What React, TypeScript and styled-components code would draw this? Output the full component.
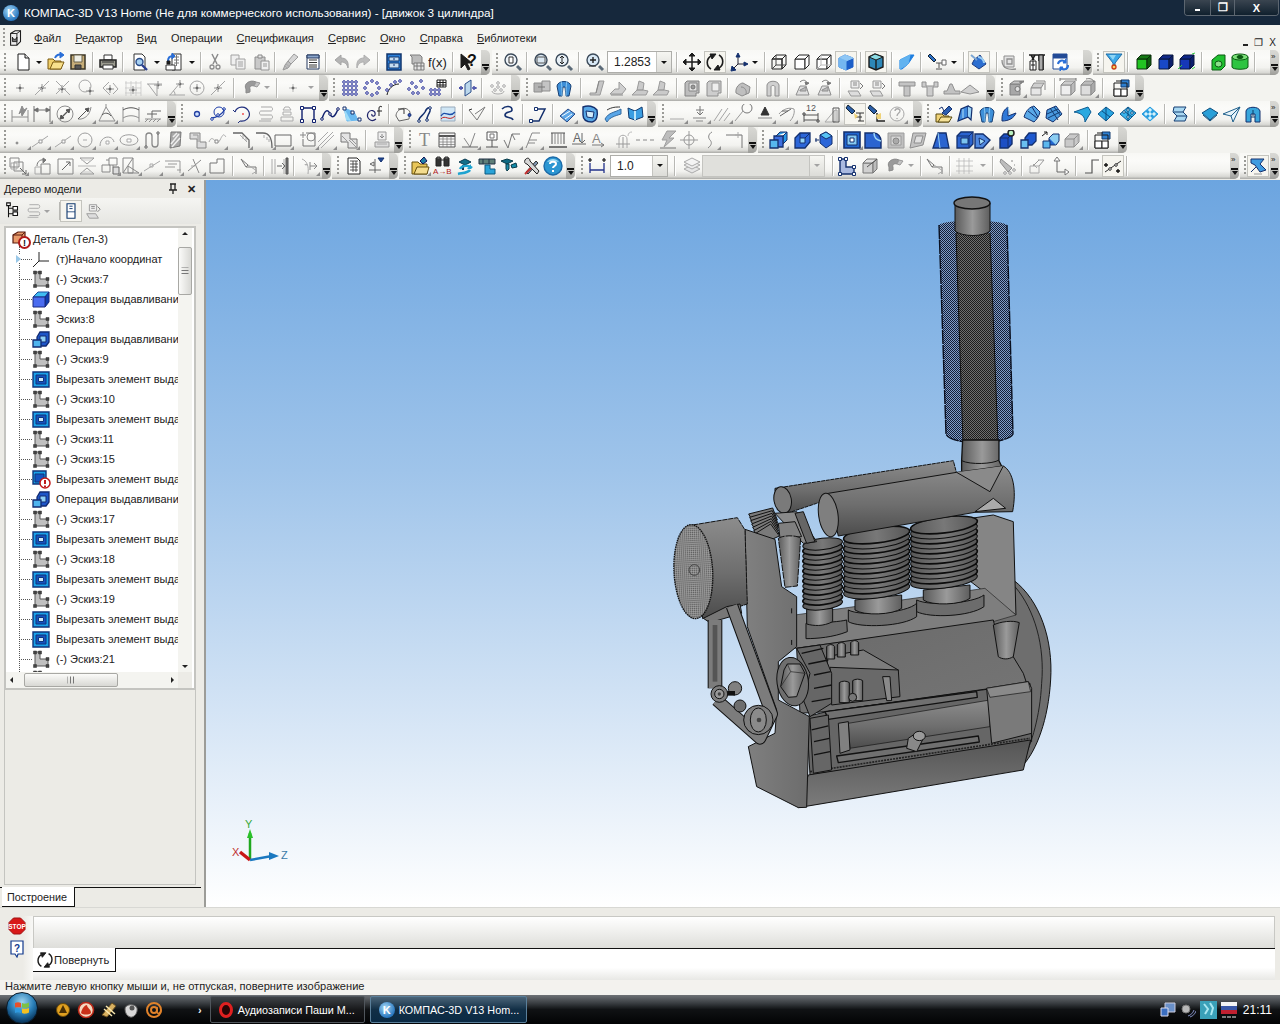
import React from 'react';
import styled, { createGlobalStyle } from 'styled-components';

const FONT = '"Liberation Sans", Arial, sans-serif';
const Global = createGlobalStyle`
  html, body { margin: 0; padding: 0; background: #ecebe6; }
  * { box-sizing: border-box; }
  body { font-family: ${FONT}; font-size: 11px; color: #111; }
`;

/* ---------- icon library ---------- */
type P = [string, string, string, number?];
const K = '#1c1c1c', N = '#14306e', B = '#2a6fd8', L = '#69b8ef', G = '#929292', W = '#fff', Y = '#efd277', X = 'none';
const cube = (f: string, t: string, r: string, s = N): P[] => [['M3 7H13V17H3Z', f, s], ['M3 7L7 3H17L13 7Z', t, s], ['M13 7L17 3V13L13 17Z', r, s]];
const mag = (f = '#eef3f8'): P[] => [['M14 14L18 18', X, '#5b6a78', 3], ['M2 8a6 6 0 1 0 12 0a6 6 0 1 0-12 0', f, '#3b4a5a', 1.4]];
const pt = (x = 10, y = 10, c = G): P[] => [[`M${x} ${y - 4}V${y + 4}M${x - 4} ${y}H${x + 4}`, X, c], [`M${x - 1} ${y}a1 1 0 1 0 2 0a1 1 0 1 0-2 0`, '#666', '#666']];
const dots = (arr: number[][], c = '#27309a'): P[] => arr.map(([x, y]) => [`M${x - 1.3} ${y}a1.3 1.3 0 1 0 2.6 0a1.3 1.3 0 1 0-2.6 0`, W, c] as P);
const diamond = (f: string): P[] => [['M2 10L10 3L18 9L10 17Z', f, '#0f5c92'], ['M6 7L14 13M10 3L10 17', X, '#0c4f82']];

const ICONS: Record<string, P[]> = {
  doc: [['M5 2H12L16 6V18H5Z', W, K], ['M12 2V6H16', '#ddd', K]],
  docK: [['M4 5L9 2H15V14L11 18H4Z', '#eee', K, 1.2], ['M4 5H11V18M11 5L15 2', X, K], ['M6 9a2.5 2.5 0 1 0 5 0V14H6Z', '#777', K]],
  open: [['M2 7H7L9 9H15V17H2Z', '#f0cf6a', '#7a5a10'], ['M4 17L7 10H18L15 17Z', '#f8e08c', '#7a5a10'], ['M9 6C10 3 13 2 15 3', X, B, 2], ['M14 0L18 3L14 6Z', B, B]],
  save: [['M3 3H17V17H3Z', '#c6ad78', '#3a3424', 1.5], ['M6 3H14V10H6Z', '#efefe6', '#6b624a'], ['M7 13H13V17H7Z', '#555', '#333']],
  print: [['M6 3H14V8H6Z', W, '#333'], ['M2 8H18V15H2Z', '#9a9a8e', '#222', 1.5], ['M5 13H15V17H5Z', W, '#333'], ['M4 10H16', X, '#333']],
  preview: [['M4 2H12L15 5V18H4Z', W, '#333'], ['M6 10a3.5 3.5 0 1 0 7 0a3.5 3.5 0 1 0-7 0', '#a7d1f2', '#284a88', 1.4], ['M12 13L17 18', X, '#2a3f8f', 2.4]],
  copies: [['M8 2H17V18H8Z', W, '#333'], ['M10 5H15M10 8H15M10 11H15M12.5 3V14', X, '#777'], ['M2 13H11V18H2Z', W, '#333'], ['M4 9C4 6 6 4 9 4', X, B, 2], ['M8 1L11 4L8 7Z', B, B], ['M3 9H6V12H3Z', K, K]],
  cut: [['M7 2L12 12M13 2L8 12', X, '#8c8c8c', 1.5], ['M5 15a2 2 0 1 0 4 0a2 2 0 1 0-4 0M11 15a2 2 0 1 0 4 0a2 2 0 1 0-4 0', X, '#8c8c8c', 1.3]],
  copy: [['M3 3H11V13H3Z', '#efefef', '#a2a2a2'], ['M8 7H17V17H8Z', '#efefef', '#a2a2a2'], ['M10 10H15M10 12H15M10 14H15', X, '#a2a2a2']],
  paste: [['M3 5H13V17H3Z', '#c9c9c9', '#8e8e8e'], ['M6 3H10V6H6Z', '#e8e8e8', '#888'], ['M9 9H17V18H9Z', '#f0f0f0', '#949494'], ['M11 12H15M11 14H15', X, '#999']],
  brush: [['M14 2L18 5L11 12L8 9Z', '#d6d6d6', '#9c9c9c'], ['M8 9L11 12L8 16L3 18L5 13Z', '#bdbdbd', '#9a9a9a'], ['M5 14L8 17M6 12L10 15', X, '#aaa']],
  tbl: [['M4 3H16V17H4Z', W, '#24385e'], ['M4 3H16V6H4Z', '#8ba6cc', '#24385e'], ['M6 8H14M6 10.5H14M6 13H14M6 15H14', X, '#333']],
  undo: [['M2 8L8 3V6C13 6 16 9 15 16C14 12 12 10 8 10V13Z', '#b4b4b4', '#a4a4a4']],
  redo: [['M18 8L12 3V6C7 6 4 9 5 16C6 12 8 10 12 10V13Z', '#bcbcbc', '#aeaeae']],
  panel: [['M3 2H17V18H3Z', '#2b7fd8', '#12366c', 1.5], ['M5 5H15V9H5Z', '#c6def2', '#12366c'], ['M5 11H15V16H5Z', '#c6def2', '#12366c'], ['M9 7H11M9 13H11', X, N]],
  vars: [['M4 3H14L16 5V12H6V5Z', '#bcbcbc', '#7f7f7f'], ['M8 11H18V18H8Z', '#e4e4e4', '#7a7a7a'], ['M11 11V18M15 11V18M8 14H18', X, '#777']],
  help: [['M3 2L3 16L7 12L10 18L12 17L9 11L14 11Z', K, K]],
  zoomD: [...mag(), ['M6 5H10V11H6Z', W, '#333']],
  zoomS: [...mag('#dbe8f2'), ['M4 5H12V11H4Z', X, '#555']],
  zoomA: [...mag('#e8f0f6'), ['M8 4V12M6 6L8 4L10 6M6 10L8 12L10 10', X, '#222']],
  zoomP: [...mag('#d8e8f5'), ['M8 5V11M5 8H11', X, '#222', 1.4], ['M4 14H11', X, '#333']],
  pan: [['M10 2V18M2 10H18', X, K, 1.5], ['M10 1L7 4H13ZM10 19L7 16H13ZM1 10L4 7V13ZM19 10L16 7V13Z', K, K]],
  rotate: [['M6 4C1 7 1 14 6 17', X, K, 1.6], ['M14 16C19 13 19 6 14 3', X, K, 1.6], ['M5 2H11L7 7Z', K, K], ['M15 18H9L13 13Z', K, K]],
  axes: [['M8 12V3M8 12H17M8 12L2 18', X, '#223'], ['M8 1L6 5H10Z', N, N], ['M18 12L14 10V14Z', N, N], ['M1 19L2 14L6 18Z', N, N]],
  wire: [...cube('none', 'none', 'none', '#222'), ['M3 17L7 13H17M7 3V13', X, '#444']],
  hide: cube(W, W, W, '#222'),
  thin: [...cube(W, W, W, '#222'), ['M3 17L7 13H17M7 3V13', X, '#bbb']],
  shade: [['M3 6L9 3L17 6V15L10 18L3 15Z', '#1c5fc8', '#1c5fc8'], ['M3 6L9 3L17 6L10 9Z', '#8fc7f5', '#8fc7f5'], ['M10 9V18L3 15V6Z', '#74b7f0', '#74b7f0']],
  shadeE: [['M3 5L9 2L17 5V15L10 18L3 15Z', '#2d87b8', K, 1.4], ['M3 5L9 2L17 5L10 8Z', '#8bdbe4', K], ['M10 8V18', X, K, 1.4]],
  persp: [['M4 8L14 3L18 3L12 12L6 17L4 17Z', '#1f7fe0', '#1f7fe0'], ['M4 8L14 3L12 12L4 17Z', '#62b3f0', '#62b3f0']],
  lamp: [['M3 2L9 8L7 10L1 4Z', '#2d6fc4', '#123'], ['M9 11L15 11M12 11V16M9 17H15', X, '#555'], ['M15 8H19V13H15Z', W, '#666']],
  orient: [['M5 8L11 3L17 12L10 17L3 12Z', '#2d6fd0', '#1e3d80'], ['M9 5C12 5 15 8 15 11', X, '#9ccff5', 2], ['M2 3L8 8', X, '#7aa6d4', 2]],
  coil: [['M5 4H15V15H5Z', '#e4e4e4', '#8e8e8e'], ['M8 7H13V12H8ZM3 8C3 17 10 18 17 17', X, '#8e8e8e', 1.3]],
  crane: [['M2 3H18M4 3L7 8M8 3L5 8M12 3V9M16 3V18', X, K, 1.5], ['M3 9H9V18H3Z', W, K], ['M4 13H8M6 9V18', X, K], ['M12 3H16V18H12Z', '#aaa', K]],
  refresh: [['M2 2H16V6H2Z', '#224a96', '#224a96'], ['M2 6H16V17H2Z', W, '#224a96'], ['M7 12a4 4 0 0 1 7-2', X, B, 2], ['M17 13a4 4 0 0 1-7 3', X, B, 2], ['M15 7V11H12Z', B, B], ['M9 19V15H12Z', B, B]],
  funnel: [['M2 2H18L11 11V14H9V11Z', '#3ca8e8', '#1f6ca8'], ['M5 3H12L9 8Z', '#8fd5f5', X], ['M8 15a2 2 0 1 0 4 0a2 2 0 1 0-4 0', '#f4d45c', '#c83a10', 1.3]],
  cubeGr: cube('#22c422', '#177a17', '#0f5c0f', '#0b2d0b'),
  cubeBl: cube('#1848c8', '#122a88', '#0c1f6c', '#08163f'),
  cubeBd: [...cube('#1638b8', '#0f2788', '#0c1f6c', '#08163f'), ['M1 17L5 13M15 2L18 1M15 17L18 15', X, '#33cc44']],
  holeG: [['M3 8L9 3H16V14L12 18H3Z', '#20c030', '#0a5a12'], ['M6 12a3.5 3 0 1 0 7 0a3.5 3 0 1 0-7 0', '#8ae08a', '#0a5a12']],
  cylG: [['M2 5V15C2 18 18 18 18 15V5Z', '#2ec442', '#0a5a12'], ['M2 5C2 1 18 1 18 5C18 9 2 9 2 5Z', '#7ce07a', '#0a5a12'], ['M7 5C7 3 13 3 13 5C13 7 7 7 7 5Z', '#0a5a12', '#0a5a12']],
  pt: pt(),
  ptL: [...pt(), ['M3 17L17 3', X, '#a6a6a6']],
  ptX: [...pt(9, 11), ['M3 3L17 17M16 3L3 16', X, '#a6a6a6']],
  ptC: [...pt(13, 13), ['M2 8a6 6 0 1 0 12 0a6 6 0 1 0-12 0', X, '#a6a6a6']],
  ptA: [...pt(10, 11), ['M3 10L9 4M3 10L10 17M13 5L18 11L13 16', X, '#a6a6a6']],
  ptG: [...pt(10, 12), ['M3 3V18M8 3V18M13 3V18M18 3V18M2 5H18M2 10H18M2 15H18', X, '#c2c2c2', 0.7]],
  ptT: [...pt(13, 7), ['M2 6H17M3 6L12 18V6', X, '#a6a6a6']],
  ptAng: [...pt(13, 6), ['M2 17H18M3 17L13 5M8 17C8 14 7 13 6 13', X, '#a6a6a6']],
  ptO: [...pt(), ['M3 10a7 7 0 1 0 14 0a7 7 0 1 0-14 0', X, '#a6a6a6']],
  ptSm: pt(10, 10, '#b5b5b5'),
  magnet: [['M4 11C1 6 8 1 14 4L12 8C9 7 7 9 8 11L8 14L4 15Z', '#9a9a9a', '#8a8a8a'], ['M14 4L18 5L15 9L12 8Z', '#c4c4c4', '#999']],
  dotsM: dots([[4, 4], [8, 4], [12, 4], [16, 4], [4, 8], [8, 8], [12, 8], [16, 8], [4, 12], [8, 12], [12, 12], [16, 12], [4, 16], [8, 16], [12, 16], [16, 16]]),
  dotsC: dots([[10, 3], [15, 5], [17, 10], [15, 15], [10, 17], [5, 15], [3, 10], [5, 5]]),
  dotsArc: [['M3 17C4 11 9 6 15 6', X, K], ...dots([[3, 12], [7, 7], [11, 4], [16, 3]])],
  dotsP: dots([[6, 5], [3, 11], [10, 9], [15, 3], [12, 15], [17, 10], [7, 15]]),
  dotsT: [['M9 2H18V9H9Z', W, K], ['M9 4.5H18M9 7H18M12 2V9M15 2V9', X, K], ...dots([[3, 12], [7, 12], [11, 12], [3, 16], [7, 16], [11, 16]])],
  mirror: [['M7 6L13 2V14L7 18Z', '#bcd8ec', '#2c4f8a'], ...dots([[3, 10], [16, 10]]), ['M1 10H5M15 10H19', X, '#27309a']],
  dotsG: [['M4 13C4 17 16 17 16 13', X, '#aaa'], ...dots([[4, 8], [10, 5], [16, 8], [7, 12], [13, 12], [10, 9]], '#a8a8a8')],
  cubes: [['M1 5H9V14H1Z', '#b2b2b2', '#8e8e8e'], ['M9 3H17V13H9Z', '#c4c4c4', '#8e8e8e'], ['M5 9H12', X, '#777']],
  arch: [['M5 18L3 8C4 2 16 2 17 8L15 18H12L11 9H9L8 18Z', '#3d8fd8', '#173e72'], ['M7 3C8 7 8 12 8 18M13 3C12 7 12 12 12 18', X, '#8cc7ef']],
  bendA: [['M3 15H9L12 3H17L13 17H3Z', '#c6c6c6', '#9a9a9a'], ['M9 15L12 3', X, '#888']],
  bendB: [['M2 16L7 11L11 11V4L18 11L14 16Z', '#cfcfcf', '#9a9a9a'], ['M3 17H15', X, '#888']],
  foldA: [['M2 17L7 12L9 3L14 5L13 12L18 13L16 17Z', '#cacaca', '#9a9a9a'], ['M7 12L13 12', X, '#888']],
  plate: [['M5 3H17V15H14V18H3V5Z', '#bdbdbd', '#828282'], ['M7 5H15V13H7Z', '#e0e0e0', '#888'], ['M9 9a2 2 0 1 0 4 0a2 2 0 1 0-4 0', '#999', '#777']],
  plate2: [['M5 3H17V15H14V18H3V5Z', '#cdcdcd', '#8e8e8e'], ['M8 5H15V13H8Z', '#eee', '#999']],
  hex: [['M3 15C2 9 7 5 10 5L17 9L16 15L9 18Z', '#bfbfbf', '#8c8c8c'], ['M8 9C12 9 14 13 13 16', X, '#8c8c8c']],
  archG: [['M4 18V7C5 2 15 2 16 7V18H12V9C12 7 8 7 8 9V18Z', '#d0d0d0', '#8e8e8e']],
  rotG: [['M3 17H16L13 8H7Z', '#e0e0e0', '#8e8e8e'], ['M7 12L13 9V13H7Z', '#bbb', '#8e8e8e'], ['M7 4C10 1 14 2 14 6', X, '#777'], ['M13 7L16 5L12 4Z', '#777', '#777']],
  stack: [['M6 3H14V10H6Z', '#eee', '#999'], ['M8 5H12M8 7H12', X, '#888'], ['M3 13H13L16 18H6Z', '#ddd', '#999'], ['M15 5L18 8L15 11', X, '#777']],
  tee: [['M2 4H18V8H13V18H7V8H2Z', '#c4c4c4', '#909090'], ['M7 8H13', X, '#888']],
  tee2: [['M2 4H6V8H14V4H18V9H13V18H7V9H2Z', '#cccccc', '#909090']],
  ramp: [['M2 16H18V13H13L10 6H8L5 13H2Z', '#c2c2c2', '#909090']],
  ramp2: [['M1 14L10 7L19 14L10 16Z', '#d0d0d0', '#909090']],
  cornerD: [['M4 6H14V17H4Z', '#a8a8a8', '#808080'], ['M4 6L8 3H18L14 6Z', '#c5c5c5', '#808080'], ['M9 11a2.5 2.5 0 1 0 5 0a2.5 2.5 0 1 0-5 0', '#e0e0e0', '#777'], ['M15 6V3M13 4H18', X, '#777']],
  cornerO: [['M3 10H13L16 5H6Z', '#cfcfcf', '#8e8e8e'], ['M3 10V17H13V10Z', '#e6e6e6', '#8e8e8e'], ['M8 3H17V12', X, '#888']],
  cubeA: [...cube('#eee', '#ccc', '#bbb', '#8e8e8e'), ['M2 1H18M2 0V3M18 0V3', X, '#777']],
  cubeR: [...cube('#ddd', '#bbb', '#aaa', '#8e8e8e'), ['M8 1C12 0 15 1 16 4', X, '#777']],
  group: [['M9 2H17V9H9Z', '#2d7fd0', '#123a6e'], ['M2 5H15V18H2Z', X, K], ['M2 11H9V18H2Z', W, K], ['M9 11H15V18H9Z', W, K], ['M4 3L10 3', X, K]],
  dimAuto: [['M2 6V18M18 6V18M2 13H18', X, '#8e8e8e'], ['M9 10L12 2L14 6L17 4L12 12L11 8Z', '#8d8d8d', '#8d8d8d']],
  dimH: [['M2 2V18M18 2V18M2 6H18', X, '#707070'], ['M2 6L6 4V8ZM18 6L14 4V8Z', '#707070', '#707070']],
  dimD: [['M2 10a8 8 0 1 0 16 0a8 8 0 1 0-16 0', X, '#8e8e8e'], ['M5 15L15 5', X, '#555', 1.2], ['M15 5L11 6L14 9ZM5 15L9 14L6 11Z', '#555', '#555']],
  dimR: [['M3 15C8 16 15 12 16 3', X, '#8e8e8e'], ['M3 15L13 5', X, '#555'], ['M14 4L10 5L13 8Z', '#555', '#555']],
  dimA: [['M2 17H18L9 3Z', X, '#8e8e8e'], ['M5 11C8 8 12 9 14 12', X, '#555'], ['M9 3V0', X, '#8e8e8e']],
  dimArc: [['M2 3V18M18 3V18M2 14C7 11 13 11 18 14', X, '#8e8e8e'], ['M2 6C7 3 13 3 18 6', X, '#555']],
  rough: [['M2 15H18M2 18L5 15M6 18L9 15M10 18L13 15M14 18L17 15', X, '#8e8e8e'], ['M9 14V7H18M4 10H14', X, '#666']],
  ptB: [['M7.5 10a2.5 2.5 0 1 0 5 0a2.5 2.5 0 1 0-5 0', '#cfe0ff', '#2340a0', 1.3]],
  circs: [['M3 14C8 14 14 11 17 5', X, '#1f3fa8', 1.3], ...dots([[4, 15], [10, 11], [16, 5]], '#1f3fa8'), ['M6 8a5 5 0 1 0 10 0a5 5 0 1 0-10 0', X, '#1f3fa8']],
  arcB: [['M3 8C5 2 14 1 17 8C19 14 13 18 8 17', X, '#21307e', 1.2], ['M10 10L12 10', X, '#f05050', 1.5], ['M3 8L1 6M8 17L6 19', X, '#21307e']],
  coilG: [['M6 3H16C18 3 18 7 16 7H6C4 7 4 11 6 11H16C18 11 18 15 16 15H6', X, '#a7a7a7'], ['M4 17H16', X, '#aaa']],
  stackG: [['M8 3H12L14 6H6ZM6 8H14V11H6ZM4 13H16V17H4Z', X, '#acacac']],
  polyB: [['M4 4H16M4 4V17M16 4V17', X, '#10206e', 1.4], ['M2.5 2.5H5.5V5.5H2.5ZM14.5 2.5H17.5V5.5H14.5ZM2.5 15.5H5.5V18.5H2.5ZM14.5 15.5H17.5V18.5H14.5Z', W, '#10206e']],
  splineB: [['M2 15C5 5 8 5 10 10S15 13 18 5', X, '#10206e', 1.5], ...dots([[2, 15], [10, 10], [18, 5]], '#10206e')],
  surfB: [['M2 4L12 8L16 16L5 17Z', L, L], ['M2 4L4 16L9 17', '#9ddcf8', X], ['M1 3H4V6H1ZM9 7H12V10H9ZM16 14H19V17H16Z', W, N]],
  spiralF: [['M11 15C6 19 1 14 3 9C5 5 11 6 10 11C9 13 6 12 7 10', X, '#20256a', 1.2], ['M14 12V4C14 2 16 2 17 3M12 7H17', X, '#222']],
  arcC: [['M3 12C3 5 13 1 17 8L16 15L6 17Z', X, '#666'], ['M5 5H11V10', X, '#333'], ['M15 11a1.5 1.5 0 1 0 3 0a1.5 1.5 0 1 0-3 0', '#3350c8', N]],
  curveB: [['M4 18C2 14 8 12 10 8C12 3 16 2 15 7C14 11 11 12 12 17', X, N, 1.5], ...dots([[4, 17], [15, 4], [12, 16]], N)],
  hatchB: [['M3 3H17V17H3Z', '#cfe6f5', '#9ab'], ['M3 12C7 5 11 15 17 8', X, '#1b4da8', 1.4], ['M3 15C7 10 11 18 17 12', X, '#c02020']],
  angleV: [['M2 6L10 16L18 3L8 10', X, '#7a7a7a'], ['M2 6L5 5', X, '#333']],
  spring: [['M4 5C8 1 14 2 14 6C14 9 7 7 7 11C7 15 14 12 15 16', X, N, 1.6]],
  zig: [['M3 17H11L17 5H8', X, N, 1.5], ['M1.5 15.5H4.5V18.5H1.5ZM6.5 3.5H9.5V6.5H6.5Z', W, N]],
  uv: [['M3 12L11 5L18 10L10 18Z', '#5fa8e8', '#284a88'], ['M5 12L13 7M8 15L15 10', X, W]],
  blob: [['M3 3C8 1 14 2 17 6C18 11 17 17 12 18C7 18 3 16 3 11Z', '#57a7e6', N, 1.4], ['M6 7L14 8L13 14L7 13Z', '#d2ecfb', N]],
  wave: [['M2 15C6 8 11 9 18 5V10C12 12 7 13 4 18Z', '#5aa7e8', '#356a9e'], ['M4 6C9 3 13 3 17 3', X, '#333']],
  swoop: [['M3 4L10 7L17 3L18 13L10 16L4 14Z', '#3a9ee2', '#123a6e'], ['M10 7L10 16', X, '#bfe7f9', 2]],
  line: [['M3 15H17', X, '#aaa']],
  tol: [['M10 2V11M6 6H14M10 11L7 8M10 11L13 8', X, '#777'], ['M3 14H16M6 17H13', X, '#888']],
  hatchL: [['M2 17L10 5M7 17L16 4M12 17L18 9', X, '#a5a5a5']],
  circT: [['M9 4a5 5 0 1 0 10 0a5 5 0 1 0-10 0', X, '#777'], ['M2 17L10 7', X, '#999']],
  triBase: [['M10 3L14 11H6Z', '#333', '#333'], ['M3 14H17', X, '#888']],
  arrowT: [['M2 10C6 5 12 3 17 5C18 9 16 14 13 17', X, '#999'], ['M5 7H11M3 12L14 5', X, '#666']],
  dim12: [['M3 9V18M17 9V18M3 11H17M3 16H17', X, '#555'], ['M2 9H4V11H2ZM16 16H18V18H16Z', W, '#444']],
  wallG: [['M2 18L12 6V18Z', X, '#aaa'], ['M10 4H16V18H10Z', X, '#555'], ['M12 6H14V18', X, '#999']],
  lampY: [['M3 1L10 7L7 10L1 4Z', '#2a5ea8', '#123'], ['M11 9L19 9M11 13L17 13M13 17H19M15 9V17', X, '#333'], ['M9 9L13 12L10 15Z', Y, X]],
  lampY2: [['M3 1L10 7L7 10L1 4Z', '#2a5ea8', '#123'], ['M10 9V17H18', X, '#222', 1.4], ['M9 11L14 9V15H10Z', Y, X]],
  quest: [['M3 10a7 7 0 1 0 14 0a7 7 0 1 0-14 0', X, '#a8a8a8'], ['M8 7C8 4 13 4 13 7C13 9 10 9 10 12M10 14V15', X, '#a8a8a8', 1.3]],
  folderY: [['M2 10H8L10 12H15V18H2Z', '#efd277', '#5b4b10'], ['M4 18L7 13H18L15 18Z', '#f5e29a', '#5b4b10'], ['M8 9L15 2L18 5L12 11Z', '#2d5fb0', N], ['M5 5L8 3L10 7', X, N]],
  shell: [['M3 17L6 5L13 2V13L3 17Z', '#3e88dc', N, 1.2], ['M13 2L17 4L16 16L13 13', '#9ad2f5', N, 1.2], ['M8 5V14', X, '#aee0fa']],
  sideB: [['M3 15C3 8 6 5 9 3V12L17 9C15 14 10 17 3 17Z', '#2f79d8', N], ['M9 3L11 10', X, '#a6dcf5']],
  coneB: [['M2 13C4 6 8 3 12 2L18 8C17 13 14 16 12 18Z', '#5aa9e8', N], ['M6 7L15 14M10 3L16 13', X, N]],
  gridB: [['M3 6L12 2L18 10L9 18L2 14Z', '#4a9ae0', N], ['M6 4L14 16M10 3L17 12M3 10L14 5M4 14L16 8', X, '#123a6e']],
  wingB: [['M1 8L15 3L18 8L12 18C12 13 9 9 1 8Z', '#2aa9e0', '#0f5c92']],
  diamA: diamond('#2aa4e0'),
  diamB: [...diamond('#39b4ec'), ...dots([[6, 8], [10, 6], [14, 9], [10, 13]], '#0b5c92')],
  diamC: [['M2 10L10 3L18 10L10 17Z', '#2a9ee0', '#2a9ee0'], ...dots([[6, 10], [10, 6], [14, 10], [10, 14], [10, 10]], '#bdeafa')],
  ribbon: [['M4 3H16L13 8L17 12L15 17H4L7 12L3 8Z', '#a9d8f2', '#173e72'], ['M4 8H13M7 12H17', X, '#173e72']],
  plane: [['M2 9L10 4L18 9L10 16Z', '#2aa0d8', '#0f4f7e'], ['M3 11L10 17L17 11', X, '#0f4f7e']],
  paper: [['M1 10L18 3L11 18L9 12Z', '#e8f4fa', '#20608c'], ['M9 12L18 3', X, '#20608c']],
  sail: [['M3 18V7C4 2 16 2 17 7V18H12V10H8V18Z', '#39a6dc', N], ['M10 6V12M8 13H12', X, '#0f3b66']],
  dot: [['M6 13a1 1 0 1 0 2 0a1 1 0 1 0-2 0', '#999', '#888']],
  line1: [['M2 17L18 6', X, '#a5a5a5'], ['M9 10H12V13H9Z', W, '#999']],
  circG: [['M3 10a7 7 0 1 0 14 0a7 7 0 1 0-14 0', X, '#9e9e9e'], ['M8 10H12', X, '#aaa']],
  arcG: [['M3 16C3 6 15 4 17 12', X, '#9e9e9e'], ['M9 11H12V14H9Z', W, '#aaa']],
  ellG: [['M1 10C1 3 19 3 19 10C19 17 1 17 1 10Z', X, '#9e9e9e'], ['M8 9H12V12H8Z', W, '#aaa']],
  sShape: [['M3 16V6C3 2 9 2 9 6V14C9 18 15 18 15 14V4', X, '#888', 1.3], ['M14 2H16V4H14ZM2 16H4V18H2Z', W, '#666']],
  hatchC: [['M6 2L16 2L15 16L5 18Z', '#a8a8a8', '#777'], ['M6 14L14 4M7 17L15 8M8 7L12 3', X, '#eee', 1.5]],
  stepG: [['M2 3H12V12H18V18H9V9H2Z', '#dcdcdc', '#888'], ['M5 5H10V12', X, '#999']],
  waveG: [['M2 12C6 2 9 18 13 10S17 5 19 7', X, '#aaa'], ['M8 10H11V13H8Z', W, '#888']],
  chamf: [['M1 3H10L17 10V18', X, '#666', 1.3], ['M8 5L15 12M11 5V9M14 8V11', X, '#aaa', 1]],
  filletG: [['M1 3H8C14 3 17 8 17 18', X, '#666', 1.3], ['M9 5V8M12 7V10M14 9V12', X, '#aaa', 1]],
  rect: [['M2 5H18V16H2Z', X, '#666']],
  trans: [['M8 3H17V16H5V9', X, '#777'], ['M5 2V8M2 5H8', X, '#888'], ['M9 7a4 4 0 1 0 8 0a4 4 0 1 0-8 0', X, '#888']],
  hatchG: [['M2 17L17 2M5 18L18 5M2 12L12 2', X, '#aaa']],
  hatchBox: [['M2 3H11V9H18V18H9V12H2Z', '#e4e4e4', '#777'], ['M3 6L8 11M10 10L17 17M12 9L17 14', X, '#999']],
  insert: [['M6 2H14V10H6Z', '#eee', '#999'], ['M10 4V8M8 6L10 8L12 6', X, '#888'], ['M3 12H17V17H3Z', '#ddd', '#999'], ['M5 14H15', X, '#aaa']],
  tbl2: [['M2 3H18V17H2Z', '#f6f6f6', '#555'], ['M2 6H18', X, '#555', 2], ['M2 9H18M2 12H18M2 14.5H18M6 6V17M10 6V17M14 6V17', X, '#777', 0.7]],
  check: [['M4 8L10 17L15 3', X, '#888'], ['M2 17H18', X, '#666']],
  flag: [['M5 2H15V10H5Z', W, '#555'], ['M10 10V17M4 17H16', X, '#555'], ['M8 4H12V8H8Z', X, '#777']],
  rough2: [['M2 10L6 18L10 4H18M10 4L13 10', X, '#777']],
  rough3: [['M3 18L9 3H17M6 10H14M5 13H12', X, '#888']],
  base: [['M4 3V14M16 3V14M3 3H17', X, '#555'], ['M7 3V14M10 3V14M13 3V14', X, '#888'], ['M1 17H19', X, '#444', 1.4]],
  thread: [['M6 18V9C6 4 14 4 14 9V18', X, '#aaa'], ['M3 14H17M10 7V18', X, '#999'], ['M15 6C15 3 17 2 19 2', X, '#bbb']],
  dash: [['M1 10H5M8 10H12M15 10H19', X, '#888']],
  bolt: [['M9 1L18 1L11 8L16 8L6 17L9 10L4 10Z', '#bdbdbd', '#9e9e9e'], ['M2 18H18', X, '#777']],
  cross: [['M10 1V19M1 10H19', X, '#999'], ['M5 10a5 5 0 1 0 10 0a5 5 0 1 0-10 0', X, '#999']],
  brace: [['M12 2C8 4 8 8 10 10C12 12 12 15 8 18', X, '#888']],
  cornerL: [['M1 5H17V18', X, '#777'], ['M13 2V8M10 5H16', X, '#aaa']],
  extA: [['M8 6L12 2H19L15 6V14L19 10V2', '#2a9ae8', N], ['M6 6H15V17H6Z', '#3d6fe0', N, 1.3], ['M2 10H10V18H2Z', '#56b7ee', N, 1.3]],
  extB: [['M3 8L8 3H18V12L13 18H3Z', '#2c66d8', N, 1.3], ['M8 8H13L13 13H8Z', '#95d6f7', N], ['M8 3V8M13 8L18 3', X, N]],
  extC: [['M6 5L12 2L18 6V14L12 18L6 13Z', '#2c66d8', N], ['M6 5L12 9L18 6L12 2Z', '#58c3f5', N], ['M1 10H5M2 8V12', X, N]],
  cutA: [['M2 2H18V18H2Z', '#2166d0', N, 1.6], ['M5 5H15V15H5Z', '#85c9f2', N], ['M8 8H12V12H8Z', W, N]],
  cutB: [['M2 18V3H11C15 3 18 7 18 11V18Z', '#2b64d0', N, 1.4], ['M11 3C11 7 13 10 18 11', X, '#9cd5f5', 1.5]],
  greyB: [['M2 3H18V18H2Z', '#bfbfbf', '#9c9c9c'], ['M5 6H15V15H5Z', '#d6d6d6', '#9c9c9c'], ['M7 11a3 3 0 1 0 6 0a3 3 0 1 0-6 0', '#aaa', '#888']],
  greyC: [['M5 3H18L15 15L2 18Z', '#c2c2c2', '#8e8e8e'], ['M8 6H15L13 13H6Z', '#e0e0e0', '#8e8e8e']],
  trap: [['M2 18L7 3H15L18 18Z', '#2b64d0', N, 1.3], ['M7 3L9 18', X, '#9cd5f5']],
  cutC: [['M2 6L6 2H18V14L14 18H2Z', '#2b64d0', N, 1.3], ['M6 8H13V14H6Z', '#7bc3ef', N], ['M2 6H14V18M14 6L18 2', X, N]],
  arrowB: [['M2 4H10L17 10L10 18H2Z', '#4f88e0', N, 1.4], ['M6 8L12 11L7 15Z', '#a2daf7', N]],
  cubeB: [['M4 8L8 4H16V14L12 18H4Z', '#1c4fc4', N, 1.4], ['M4 8H12V18M12 8L16 4', X, N], ['M12 3a3 3 0 1 0 6 0a3 3 0 1 0-6 0', '#b8f0c0', '#222', 1.5]],
  cubes2: [['M7 8L11 3H18V11L14 15H7Z', '#1e59cf', N, 1.3], ['M3 10H10V18H3Z', '#69bff0', N, 1.3]],
  cubes3: [['M9 8H16V15H9Z', '#2166d0', N], ['M3 11H10V18H3Z', '#5cb7ee', N], ['M9 8L13 4H19V11L16 15', '#8ccdf2', N], ['M2 6L7 2M7 2L4 2M7 2V5', X, K]],
  cubeG2: [['M3 9L8 4H17V12L12 17H3Z', '#c9c9c9', '#8e8e8e'], ['M3 9H12V17M12 9L17 4', X, '#8e8e8e'], ['M7 4H16V12', X, '#aaa']],
  mv: [['M2 2H11V11H2Z', X, '#888'], ['M6 6H15V15H6Z', X, '#888'], ['M3 7H9V13H3Z', X, '#aaa'], ['M12 12L18 18M18 14V18H14', X, '#666']],
  rt: [['M9 8H18V18H9Z', X, '#888'], ['M3 11H9V18H3Z', X, '#aaa'], ['M5 10C5 5 9 3 13 4', X, '#777'], ['M11 2L14 4L11 7Z', '#777', '#777']],
  sc: [['M2 3H17V18H2Z', X, '#888'], ['M6 14L14 6M10 6H14V10', X, '#666']],
  mr: [['M3 2H17L10 8ZM10 12L17 18H3Z', X, '#999'], ['M1 10H19', X, '#aaa', 0.8], ['M4 4H14M5 16H15', X, '#ccc']],
  cp: [['M9 2H17V9H9Z', X, '#888'], ['M2 9H10V16H2Z', X, '#888'], ['M13 11H19V18H13Z', '#ddd', '#666'], ['M6 4H9M13 9V11', X, '#888']],
  defm: [['M2 2H12V17H2Z', X, '#888'], ['M2 17L12 2M7 10L18 17H7Z', X, '#888']],
  ln: [['M2 15L18 5M8 8H11V11H8Z', X, '#aaa']],
  tr: [['M2 5L17 5V17M2 11H12M14 14H18M5 8H14', X, '#999']],
  xx: [['M3 15L16 4M8 3L14 17', X, '#8a8a8a'], ['M6 10H10', X, '#aaa']],
  poly: [['M3 7H10V3H17V17H3Z', X, '#777']],
  ang: [['M2 3L9 9L7 11ZM7 11H17V18', X, '#777'], ['M9 9L18 15L13 18', X, '#aaa']],
  sepg: [['M2 3V18M5 3V18M14 3V18', X, '#aaa'], ['M7 10H12M12 7L15 10L12 13', X, '#666'], ['M16 2H18V18H16Z', '#777', '#555']],
  mirG: [['M3 3C8 5 10 10 9 18', X, '#aaa'], ['M11 10H18M15 7L18 10L15 13M11 6V14', X, '#888'], ['M6 8a1 1 0 1 0 2 0', X, '#999']],
  page: [['M4 2H13L16 5V18H4Z', W, '#222'], ['M6 5H14M6 8H14M6 11H14M6 14H14M9 5V16M12 5V16', X, '#333', 0.8]],
  level: [['M3 14H15', X, '#666'], ['M9 3V17', X, '#555', 0.9], ['M12 2H18L15 6Z', '#214a96', N], ['M4 8L8 6V10Z', X, '#666']],
  folder2: [['M2 6H8L10 8H17V18H2Z', '#e9c659', '#66500e'], ['M4 18L7 11H19L17 18Z', '#f4dc8e', '#66500e'], ['M10 5L14 1L17 5L13 8Z', '#1f7ea8', '#115']],
  binoc: [['M3 2H8V10H3ZM11 2H16V10H11ZM8 4H11', '#333', '#222'], ['M4 1H7V3H4ZM12 1H15V3H12Z', '#777', '#333']],
  gears: [['M4 6L10 3L16 6L10 9Z', '#136f8a', '#0a3a50'], ['M8 9V14', X, '#135', 2], ['M5 13C7 9 14 9 17 12', X, '#1ea3d0', 2.5], ['M16 8V13H12Z', '#1ea3d0', X], ['M3 18C7 17 13 17 15 14', X, '#1ea3d0', 2.5]],
  blocks: [['M2 3H18V8H2Z', '#5f7f78', '#234'], ['M6 3V8M12 3V8', X, '#234'], ['M8 9H13V13H18V18H8Z', '#2aa3d8', '#0d5a80']],
  screw: [['M3 5L9 3L15 5L9 8Z', '#0f6a83', '#083a48'], ['M8 8H11V13L9 15L8 13Z', '#1d8ca8', '#083a48'], ['M13 9L18 7L19 11L14 12Z', '#138aa8', '#083a48']],
  tools: [['M4 16L14 5L16 7L6 18Z', '#7e93ad', '#333'], ['M3 4C5 1 8 2 8 5L17 15L15 18L5 8C3 8 2 6 3 4Z', '#d6d6d6', '#222'], ['M3 18L9 12', X, '#c23030', 2]],
  helpC: [['M1 10a9 9 0 1 0 18 0a9 9 0 1 0-18 0', '#2b96d2', '#1b6aa8', 1.4], ['M4 6C7 2 13 2 16 6C13 5 7 5 4 6Z', '#9bdaf5', X], ['M7 8C7 5 13 5 13 8C13 10 10 10 10 12M10 14V16', X, W, 2]],
  step: [['M3 7V17M17 7V17M3 14H17', X, '#22328a', 1.3], ['M3 2V6M1 4H5M17 2V6M15 4H19', X, '#111', 1.2]],
  layers: [['M2 13L10 9L18 13L10 17Z', '#e6e6e6', '#aaa'], ['M2 9L10 5L18 9L10 13Z', '#eee', '#aaa'], ['M2 6L10 2L18 6L10 10Z', '#f4f4f4', '#aaa']],
  sketchB: [['M3 3H9V11H17V18H3Z', '#a9b9e0', N, 1.4], ['M1.5 1.5H4.5V4.5H1.5ZM7.5 1.5H10.5V4.5H7.5ZM15.5 16.5H18.5V19.5H15.5ZM1.5 16.5H4.5V19.5H1.5ZM15.5 9.5H18.5V12.5H15.5Z', W, N]],
  cubeEd: [...cube('#d0d0d0', '#e2e2e2', '#bcbcbc', '#777'), ['M7 11L17 3', X, '#555']],
  grid: [['M4 2V18M9 2V18M14 2V18M1 5H18M1 10H18M1 15H18', X, '#b2b2b2', 0.7]],
  sdots: [['M4 3L15 12L11 16L3 6Z', '#bdbdbd', '#8e8e8e'], ['M14 5H16M17 9H18', X, '#888'], ...dots([[8, 17], [13, 17], [17, 14]], '#999')],
  sysA: [['M3 10H12V17H3Z', X, '#aaa'], ['M6 10L12 4M12 10L17 4H11', X, '#999'], ['M6 8L10 12', X, '#aaa']],
  sysB: [['M7 3V16H18', X, '#666'], ['M7 1L4 5H10ZM19 16L15 13V19Z', W, '#777']],
  stepL: [['M3 17H10V4H17', X, '#555', 1.2]],
  snapH: [['M2 16L18 5', X, '#333'], ['M3 7V11M1 9H5M15 13V17M13 15H17', X, '#111', 1.4], ...dots([[7, 13], [13, 9]], '#333')],
  snapB: [['M3 3H16L12 8L18 14L12 16L7 9L3 7Z', '#3f9be0', N], ['M3 16L8 11', X, N], ['M6 18H14', X, '#999', 1]],
  treeI: [['M5 3V17M5 7H10M5 13H10', X, '#111', 1.2], ['M3 1H7V4H3ZM10 5H15V9H10ZM10 11H15V15H10Z', W, '#111', 1.2]],
  treeDoc: [['M5 1H15V19H5Z', W, '#123a6e', 1.4], ['M8 4H12M8 7H12', X, '#123a6e', 1.2], ['M5 11H15', X, '#123a6e']],
  axesT: [['M8 3V12H18M8 12L2 18', X, '#222']],
  sketchT: [['M4 3H9V10H17V17H4Z', '#c0c0c0', '#555'], ['M2.5 2H5.5V5H2.5ZM7.5 2H10.5V5H7.5ZM2.5 15.5H5.5V18.5H2.5ZM15 15.5H18V18.5H15ZM15 8.5H18V11.5H15Z', '#444', '#333', 0.5]],
  extT: [['M2 8L7 3H18L14 8Z', '#3fbcf2', '#1a4aa0'], ['M14 8L18 3V13L14 18Z', '#0f3cb0', '#1a2a80'], ['M2 8H14V18H2Z', '#4b6cf0', '#1a2a80']],
  ext2T: [['M6 8L9 3H18V13L15 17H6Z', '#1d55c8', '#122a70', 1.3], ['M9 7H15V13H9Z', '#8fd0f5', '#122a70'], ['M2 11H10V18H2Z', '#4fb4ee', '#122a70', 1.3]],
  cutT: [['M2 3H18V18H2Z', '#19a0e8', '#10347a', 1.4], ['M5 6H15V15H5Z', '#1452c0', '#10347a'], ['M7.5 8.5H12.5V12.5H7.5Z', '#cfeaf8', '#10347a']],
  cutErr: [['M2 2H15V15H2Z', '#19a0e8', '#10347a', 1.4], ['M4 5H13V13H4Z', '#1452c0', '#10347a'], ['M9 14a5 5 0 1 0 10 0a5 5 0 1 0-10 0', W, '#c01818', 1.5], ['M14 11V15M14 16.5V18', X, '#c01818', 2]],
  rootT: [['M3 6L8 3H15V11L12 14H3Z', '#e89a6a', '#5a1c10', 1.2], ['M3 6H12V14M12 6L15 3', X, '#5a1c10']],
  fx: [], T: [],
  A1: [['M2 14H16M12 3V13M9 10L12 13L15 10', X, '#666']],
  A2: [['M2 15H14M14 15L11 13M14 15L11 17', X, '#777']],
};
const TEXTS: Record<string, [string, number, number, number, string?]> = {
  fx: ['f(x)', 0, 15, 13],
  help: ['?', 9, 14, 16, '#111'],
  T: ['T', 3, 16, 18, '#888'],
  A1: ['A', 3, 12, 12, '#666'],
  A2: ['A', 2, 13, 13, '#888'],
  dim12: ['12', 5, 7, 9, '#555'],
  binoc: ['A→B', 0, 18, 8, '#b02020'],
};

const Svg = styled.svg`display: block; flex: none;`;
const Icon: React.FC<{ k: string; size?: number }> = ({ k, size = 20 }) => {
  const t = TEXTS[k];
  return (
    <Svg width={size} height={size} viewBox="0 0 20 20">
      {(ICONS[k] || []).map(([d, f, s, w], i) => <path key={i} d={d} fill={f} stroke={s} strokeWidth={w ?? 1} />)}
      {t && <text x={t[1]} y={t[2]} fontSize={t[3]} fontFamily={k === 'T' ? '"Liberation Serif", serif' : FONT} fontWeight={k === 'help' ? 700 : 400} fill={t[4] ?? '#222'}>{t[0]}</text>}
    </Svg>
  );
};

/* ---------- toolbars ---------- */
const Rows = styled.div`display: flex; flex-direction: column; background: #f3f3ef;`;
const Row = styled.div<{ $h: number }>`display: flex; height: ${p => p.$h}px; align-items: stretch;`;
const Bar = styled.div`
  display: flex; align-items: center; flex: none; position: relative;
  background: linear-gradient(#f8f8f5 0%, #fbfbf9 30%, #f3f3f0 70%, #d9d9d5 90%, #a9a9a6 100%);
  border-radius: 0 5px 5px 0;
  padding-bottom: 1px;
`;
const Grip = styled.i`
  display: block; flex: none; width: 2px; height: 19px;
  background: repeating-linear-gradient(#9a9a96 0 2px, transparent 2px 4px);
`;
const Sep = styled.i`display: block; flex: none; width: 1px; height: 20px; background: #b8b8b4; border-right: 1px solid #fff; box-sizing: content-box;`;
const Caret = styled.i<{ $grey?: boolean }>`
  display: block; flex: none; width: 0; height: 0;
  border-left: 3px solid transparent; border-right: 3px solid transparent;
  border-top: 3px solid ${p => (p.$grey ? '#a2a2a2' : '#111')};
`;
const Btn = styled.span<{ $on?: boolean }>`
  display: flex; flex: none; width: 22px; height: 22px; align-items: center; justify-content: center; position: relative;
  ${p => p.$on && 'background: #f6f5ef; outline: 1px solid #c4c4be; outline-offset: -1px;'}
`;
const Fly = styled.i`
  position: absolute; right: 0; bottom: 1px; width: 0; height: 0;
  border-left: 4px solid transparent; border-bottom: 4px solid #8c8c8c;
`;
const Handle = styled.span`
  position: absolute; right: 0; top: 0; bottom: 0; width: 9px;
  background: linear-gradient(#d8d8d4, #c8c8c4 60%, #9c9c98);
  border-radius: 0 5px 5px 0;
  display: flex; flex-direction: column; align-items: center; justify-content: flex-end; padding-bottom: 4px; gap: 1px;
  &::before { content: ''; display: block; width: 7px; height: 2px; background: #111; }
  &::after { content: ''; display: block; width: 0; height: 0; border-left: 3.5px solid transparent; border-right: 3.5px solid transparent; border-top: 4px solid #111; }
`;
const More = styled.b`position: absolute; top: 3px; left: 1px; font-size: 8px; line-height: 8px; letter-spacing: -1px; font-weight: 400; color: #222; font-family: ${FONT};`;
const Combo = styled.div<{ $off?: boolean }>`
  display: flex; flex: none; height: 22px; align-items: stretch;
  border: 1px solid ${p => (p.$off ? '#c4c4c0' : '#aeaeaa')};
  background: ${p => (p.$off ? '#e0e0dc' : '#fff')};
  font: 12px ${FONT}; color: #222;
`;
const ComboText = styled.span`flex: 1; display: flex; align-items: center; padding-left: 6px; overflow: hidden; white-space: nowrap;`;
const ComboArrow = styled.span`
  flex: none; width: 15px; display: flex; align-items: center; justify-content: center;
  background: linear-gradient(#f6f6f2, #dcdcd8); border-left: 1px solid #c4c4c0;
`;

type Grp = { s: number; e: number; items: string; h?: boolean; more?: boolean };
const ROWS: { h: number; groups: Grp[] }[] = [
  { h: 25, groups: [
    { s: 0, e: 490, h: true, items: 'g:5 doc:23 v:39 open:56 save:78 |:93 print:108 |:123 preview:140 v:157 copies:174 v:192 |:201 cut:215 copy:238 paste:262 |:275 brush:290 tbl:313 |:326 undo:343 redo:362 |:378 panel:394 vars:416 fx:438 |:453 help:468' },
    { s: 492, e: 1092, h: true, items: 'g:497 zoomD:513 |:527 zoomS:543 zoomA:564 |:579 zoomP:595 combo:607:672:1.2853 |:677 pan:692 rotate:715* axes:740 v:755 |:765 wire:779 hide:802 thin:824 shade:846* |:861 shadeE:876* |:892 persp:906 |:921 lamp:937 v:954 |:964 orient:979* |:997 coil:1009 |:1024 crane:1037 refresh:1061' },
    { s: 1093, e: 1279, h: true, more: true, items: 'g:1098 funnel:1114* |:1128 cubeGr:1144 cubeBl:1166 cubeBd:1187 |:1202 holeG:1219 cylG:1240 |:1255' },
  ] },
  { h: 26, groups: [
    { s: 0, e: 328, h: true, items: 'g:5 pt:20 ptL:42 ptX:63 ptC:87 ptA:110 ptG:133 ptT:155 ptAng:177 ptO:197 ptL:218 |:234 magnet:252 w:267 |:277 ptSm:293 w:311' },
    { s: 329, e: 520, h: true, items: 'g:334 dotsM:350 dotsC:372 dotsArc:394 dotsP:416 dotsT:438 |:452 mirror:468 |:482 dotsG:498' },
    { s: 521, e: 995, h: true, items: 'g:527 cubes:543 arch:564 |:581 bendA:597 bendB:618 foldA:640 foldA:661 |:677 plate:692 plate2:714 |:728 hex:743 |:757 archG:773 |:788 rotG:803 rotG:825 |:840 stack:855 stack:877 |:892 tee:907 tee2:930 ramp:952 ramp2:970' },
    { s: 996, e: 1144, h: true, items: 'g:1002 cornerD:1016! cornerO:1038 |:1055 cubeA:1068 cubeR:1088! |:1103 group:1122' },
  ] },
  { h: 26, groups: [
    { s: 0, e: 176, h: true, items: 'g:5 dimAuto:20 dimH:42! dimD:65 dimR:85! dimA:107! dimArc:131 rough:153' },
    { s: 177, e: 656, h: true, items: 'g:182 ptB:197 circs:218! arcB:242 coilG:265 stackG:287 polyB:308 splineB:330 surfB:352 spiralF:375 |:389 arcC:403 curveB:425 hatchB:448 |:463 angleV:477 |:493 spring:508 |:523 zig:538 |:553 uv:567! blob:590 wave:613 swoop:635' },
    { s: 658, e: 922, h: true, items: 'g:663 line:677! tol:700! hatchL:722! circT:743 triBase:765! arrowT:787! dim12:811 wallG:833 lampY:855* lampY2:877 quest:897!' },
    { s: 923, e: 1279, h: true, more: true, items: 'g:928 folderY:944 shell:965 arch:987 sideB:1009 coneB:1032 gridB:1054 |:1069 wingB:1083 diamA:1106 diamB:1128 diamC:1150 |:1165 ribbon:1180 |:1195 plane:1210 paper:1232 sail:1253' },
  ] },
  { h: 26, groups: [
    { s: 0, e: 403, h: true, items: 'g:5 dot:20! line1:40! line1:63! circG:85! arcG:107! ellG:129! sShape:153 hatchC:175 stepG:198 waveG:217! chamf:242! filletG:265! rect:283! trans:308! hatchG:326! hatchBox:349! |:366 insert:382' },
    { s: 404, e: 757, h: true, items: 'g:410 T:426 tbl2:447 check:470! flag:492 rough2:512! rough3:533! base:558 A1:580 A2:600 thread:623 dash:645 bolt:668 cross:689 brace:710! cornerL:735' },
    { s: 758, e: 1127, h: true, items: 'g:763 extA:778! extB:802 extC:824 |:838 cutA:852! cutB:873 greyB:896 greyC:918 trap:941 cutC:965 arrowB:983! cubeB:1006 cubes2:1028 cubes3:1050 cubeG2:1072! |:1088 group:1103' },
  ] },
  { h: 26, groups: [
    { s: 0, e: 331, h: true, items: 'g:5 mv:18! rt:42 sc:66 mr:87 cp:110! defm:131! ln:152! tr:173! xx:195! poly:217 |:233 ang:249 |:264 sepg:280 |:294 mirG:309!' },
    { s: 332, e: 398, h: true, items: 'g:338 page:354 level:376' },
    { s: 399, e: 575, h: true, items: 'g:405 folder2:420! binoc:443 gears:465 blocks:487 screw:508 tools:532 helpC:553' },
    { s: 576, e: 1239, h: true, more: true, items: 'g:582 step:597 combo:610:668:1.0 |:675 layers:692 combo:702:825::off |:833 sketchB:847 cubeEd:870 magnet:895 w:911 |:921 ang:935 |:950 grid:965 w:983 |:993 sdots:1007 |:1022 sysA:1037 sysB:1060 |:1076 stepL:1092 snapH:1113* |:1127' },
    { s: 1240, e: 1279, h: true, more: true, items: 'g:1245 snapB:1258*' },
  ] },
];

const Tool: React.FC<{ g: Grp; left: number }> = ({ g, left }) => {
  let right = g.s;
  const place = (cx: number, w: number) => { const m = cx - w / 2 - right; right = cx + w / 2; return { marginLeft: m }; };
  return (
    <Bar style={{ marginLeft: left, width: g.e - g.s }}>
      {g.items.split(' ').map((tok, i) => {
        const a = tok.split(':');
        const raw = a[1];
        if (a[0] === 'g') return <Grip key={i} style={place(+raw, 2)} />;
        if (a[0] === '|') return <Sep key={i} style={place(+raw, 2)} />;
        if (a[0] === 'v' || a[0] === 'w') return <Caret key={i} $grey={a[0] === 'w'} style={place(+raw, 6)} />;
        if (a[0] === 'combo') {
          const s = +a[1], e = +a[2];
          const m = s - right; right = e;
          return (
            <Combo key={i} $off={a[4] === 'off'} style={{ marginLeft: m, width: e - s }}>
              <ComboText>{a[3]}</ComboText>
              <ComboArrow><Caret $grey={a[4] === 'off'} /></ComboArrow>
            </Combo>
          );
        }
        const cx = parseInt(raw, 10);
        return (
          <Btn key={i} $on={raw.endsWith('*')} style={place(cx, 22)}>
            <Icon k={a[0]} />
            {raw.endsWith('!') && <Fly />}
          </Btn>
        );
      })}
      {g.h && <Handle>{g.more && <More>»</More>}</Handle>}
    </Bar>
  );
};

/* ---------- shell ---------- */
const Page = styled.div`width: 1280px; height: 1024px; display: flex; flex-direction: column; overflow: hidden; background: #ecebe6;`;
const TitleBar = styled.div`
  height: 25px; flex: none; background: #16283c; color: #fff; display: flex; align-items: center; padding-left: 3px;
  font: 11.75px ${FONT}; gap: 5px; position: relative;
`;
const LogoC = styled.span`
  width: 16px; height: 16px; border-radius: 50%; flex: none; display: flex; align-items: center; justify-content: center;
  background: radial-gradient(circle at 40% 35%, #a5d8f5, #2a78c0 70%); color: #fff; font: 700 11px ${FONT};
`;
const WinBtns = styled.div`
  position: absolute; right: 1px; top: 0; height: 16px; display: flex; border: 1px solid #5c6670; border-top: 0; border-radius: 0 0 4px 4px; overflow: hidden;
`;
const WinBtn = styled.span<{ $w: number }>`
  width: ${p => p.$w}px; display: flex; align-items: center; justify-content: center; color: #fff; font: 700 11px ${FONT};
  background: linear-gradient(#3a4550, #10202e); border-left: 1px solid #5c6670;
  &:first-child { border-left: 0; }
`;
const MenuBar = styled.div`
  height: 25px; flex: none; display: flex; align-items: center; background: #f3f3ef; padding-left: 3px; position: relative; font: 11px ${FONT}; color: #222;
`;
const MenuItem = styled.span`margin-left: 14.2px; white-space: nowrap; ${Btn} + & { margin-left: 7px; } u { text-underline-offset: 1px; }`;
const DocBtns = styled.div`position: absolute; right: 4px; top: 12px; display: flex; gap: 6px; color: #222; font: 10px ${FONT}; align-items: center;`;
const MinBar = styled.i`display: block; width: 5px; height: 2px; background: currentColor; margin-top: 5px;`;
const Work = styled.div`flex: 1; display: flex; min-height: 0; margin-top: 1px;`;
const Side = styled.aside`
  width: 206px; flex: none; display: flex; flex-direction: column; background: #ecebe6; border-right: 2px solid #9c9c98; padding-right: 3px;
`;
const SideHead = styled.div`height: 18px; flex: none; display: flex; align-items: center; justify-content: space-between; padding: 0 5px 0 4px; font: 10.8px ${FONT}; color: #222;`;
const SideActions = styled.div`display: flex; gap: 9px; align-items: center; font-weight: 700;`;
const SideTools = styled.div`height: 26px; flex: none; display: flex; align-items: center; padding-left: 4px; background: linear-gradient(#f5f5f2, #e6e6e2);`;
const SideSep = styled.i`width: 1px; height: 18px; background: #b8b8b4; margin: 0 0 0 9px;`;
const TreeFrame = styled.div`
  margin: 2px 5px 0 4px; height: 464px; flex: none; border: 2px solid #c4c4c0; display: grid; grid-template-columns: 1fr 14px; grid-template-rows: 1fr 16px; background: #fff; padding-right: 2px;
`;
const TreeList = styled.div`position: relative; overflow: hidden; padding-top: 1px;`;
const TreeLine = styled.i`position: absolute; left: 13px; top: 18px; bottom: 0; border-left: 1px dotted #555;`;
const TreeRow = styled.div<{ $root?: boolean }>`
  height: 20px; display: flex; align-items: center; white-space: nowrap; position: relative; font: 11px ${FONT}; color: #222;
  padding-left: ${p => (p.$root ? 4 : 25)}px; gap: ${p => (p.$root ? 3 : 5)}px;
  &::before { content: ''; position: absolute; left: 13px; width: 13px; top: 10px; border-top: 1px dotted #555; ${p => p.$root && 'display:none;'} }
`;
const Expander = styled.i`
  position: absolute; left: 10px; top: 6px; width: 0; height: 0; background: #fff;
  border-top: 4px solid transparent; border-bottom: 4px solid transparent; border-left: 5px solid #9ac8e8;
`;
const Scroll = styled.div<{ $h?: boolean }>`
  display: flex; flex-direction: ${p => (p.$h ? 'row' : 'column')}; align-items: center; background: #f4f4f0; position: relative;
  justify-content: space-between;
`;
const ScrollArrow = styled.i<{ $dir: string }>`
  display: block; width: 0; height: 0; margin: 4px;
  ${p => p.$dir === 'up' && 'border-left:3px solid transparent;border-right:3px solid transparent;border-bottom:3px solid #222;'}
  ${p => p.$dir === 'down' && 'border-left:3px solid transparent;border-right:3px solid transparent;border-top:3px solid #222;'}
  ${p => p.$dir === 'left' && 'border-top:3px solid transparent;border-bottom:3px solid transparent;border-right:3px solid #222;'}
  ${p => p.$dir === 'right' && 'border-top:3px solid transparent;border-bottom:3px solid transparent;border-left:3px solid #222;'}
`;
const Thumb = styled.i<{ $h?: boolean }>`
  position: absolute; display: block; border: 1px solid #a8a8a4; border-radius: 2px;
  background: linear-gradient(${p => (p.$h ? '#fbfbf9, #d8d8d4' : '90deg, #fbfbf9, #d8d8d4')});
  ${p => (p.$h ? 'left:18px;width:94px;top:1px;bottom:1px;' : 'top:19px;height:48px;left:0;right:0;')}
  &::after {
    content: ''; position: absolute; left: 50%; top: 50%; transform: translate(-50%, -50%);
    ${p => (p.$h
      ? 'width:7px;height:7px;background:repeating-linear-gradient(90deg,#777 0 1px,transparent 1px 3px);'
      : 'width:7px;height:7px;background:repeating-linear-gradient(#777 0 1px,transparent 1px 3px);')}
  }
`;
const ScrollCorner = styled.div`background: #ecebe6;`;
const LowerPane = styled.div`flex: 1; margin: 0 5px 2px 4px; border: 1px solid #c4c4c0; border-top: 0; background: #ecebe6;`;
const Tabs = styled.div`height: 20px; flex: none; display: flex; border-top: 1px solid #111;`;
const Tab = styled.div`
  margin: -1px 0 0 2px; height: 20px; width: 73px; background: #fff; display: flex; align-items: center; padding-left: 5px; border-right: 1px solid #111; border-bottom: 1px solid #111; font: 10.8px ${FONT}; color: #222;
`;
const View = styled.main`flex: 1; position: relative; background: linear-gradient(#6ca5e0 0%, #9fc4ea 40%, #cfe1f4 70%, #ffffff 100%); overflow: hidden;`;
const ViewSvg = styled.svg`position: absolute; left: 0; top: 0;`;

const Cmd = styled.section`height: 73px; flex: none; display: flex; background: #ecebe6; padding: 8px 5px 0 4px; border-top: 1px solid #d8d8d4;`;
const CmdIcons = styled.div`width: 29px; flex: none; display: flex; flex-direction: column; align-items: center; gap: 5px; padding: 1px 4px 0 0; background: linear-gradient(90deg, #ecebe6 65%, #f8f8f6);`;
const CmdMain = styled.div`flex: 1; display: flex; flex-direction: column; min-width: 0;`;
const CmdField = styled.div`height: 32px; flex: none; background: linear-gradient(#fff, #f2f2f0 40%, #dededa); border: 1px solid #c8c8c4; border-bottom: 0;`;
const CmdTabs = styled.div`flex: 1; display: flex; border-top: 1px solid #111; background: linear-gradient(#fff 60%, #e8e8e5);`;
const CmdTab = styled.div`
  margin-top: -1px; height: 24px; width: 83px; background: #fff; border-right: 1px solid #111; border-bottom: 1px solid #111; padding-left: 3px;
  display: flex; align-items: center; font: 11.2px ${FONT}; color: #222;
`;
const Status = styled.div`height: 15px; flex: none; font: 11.1px ${FONT}; color: #222; padding: 0 0 3px 5px; display: flex; align-items: center; background: #f3f2ee;`;
const Taskbar = styled.footer`
  height: 29px; flex: none; display: flex; align-items: center; position: relative; color: #fff; font: 10.8px ${FONT};
  background: linear-gradient(#6e7276 0%, #3a3e42 28%, #101214 50%, #020304 100%);
`;
const Orb = styled.div`
  width: 32px; height: 32px; margin: -3px 0 0 6px; border-radius: 50%; flex: none; display: grid; place-items: center;
  background: radial-gradient(circle at 50% 30%, #9fd4ef, #2a7fb8 45%, #0c3e68 75%, #062238); border: 1px solid #0a1a28;
`;
const Quick = styled.div`display: flex; align-items: center; margin-left: 15px; gap: 2px; width: 128px;`;
const Chev = styled.span`font: 700 11px ${FONT}; color: #eee; margin: 0 8px 0 17px;`;
const TaskBtn = styled.div<{ $on?: boolean; $w: number }>`
  width: ${p => p.$w}px; height: 27px; margin-right: 5px; flex: none; display: flex; align-items: center; gap: 4px; padding-left: 8px; border-radius: 2px; border: 1px solid ${p => (p.$on ? '#5a7f9a' : '#50565c')};
  background: ${p => (p.$on ? 'linear-gradient(#4a6478, #122f46 50%, #0a2a44)' : 'linear-gradient(#3e4246, #18191b 50%, #0a0a0c)')};
  white-space: nowrap; overflow: hidden;
`;
const Tray = styled.div`position: absolute; right: 8px; top: 0; bottom: 0; display: flex; align-items: center; gap: 4px; font: 12px ${FONT};`;
const Clock = styled.span`margin-left: 2px;`;
const OperaO = styled.span`width: 14px; height: 16px; border: 3px solid #e02020; border-radius: 50%; background: #2a0505; flex: none; margin-right: 1px;`;

/* ---------- tree ---------- */
const TREE: [string, string][] = [
  ['axesT', '(т)Начало координат'], ['sketchT', '(-) Эскиз:7'], ['extT', 'Операция выдавливания'], ['sketchT', 'Эскиз:8'], ['ext2T', 'Операция выдавливания'],
  ['sketchT', '(-) Эскиз:9'], ['cutT', 'Вырезать элемент выдавливанием'], ['sketchT', '(-) Эскиз:10'], ['cutT', 'Вырезать элемент выдавливанием'], ['sketchT', '(-) Эскиз:11'],
  ['sketchT', '(-) Эскиз:15'], ['cutErr', 'Вырезать элемент выдавливанием'], ['ext2T', 'Операция выдавливания'], ['sketchT', '(-) Эскиз:17'], ['cutT', 'Вырезать элемент выдавливанием'],
  ['sketchT', '(-) Эскиз:18'], ['cutT', 'Вырезать элемент выдавливанием'], ['sketchT', '(-) Эскиз:19'], ['cutT', 'Вырезать элемент выдавливанием'], ['cutT', 'Вырезать элемент выдавливанием'],
  ['sketchT', '(-) Эскиз:21'], ['sketchT', ''],
];
const Root = styled.span`position: relative; width: 20px; height: 20px; flex: none; display: block;`;
const RootBadge = styled.b`position: absolute; left: 8px; top: 7px; width: 13px; height: 13px; border-radius: 50%; border: 2px solid #b01818; background: #fff; color: #111; display: flex; align-items: center; justify-content: center; font: 700 9px ${FONT};`;

/* ---------- engine ---------- */
const Fins: React.FC<{ cx: number; rx: number; top: number; n: number; step: number; ry: number }> = ({ cx, rx, top, n, step, ry }) => (
  <>
    {Array.from({ length: n }).map((_, i) => {
      const y = top + (n - 1 - i) * step;
      return (
        <g key={i} transform={`rotate(-7 ${cx} ${y})`}>
          <ellipse cx={cx} cy={y} rx={rx} ry={ry} fill="url(#finG)" stroke="#0c0c0c" strokeWidth={i % 2 ? 5 : 3} />
        </g>
      );
    })}
  </>
);

const Engine: React.FC = () => (
  <ViewSvg width={1074} height={727} viewBox="206 180 1074 727">
    <defs>
      <linearGradient id="pipeV" x1="0" y1="0" x2="0" y2="1"><stop offset="0" stopColor="#8c8c8c" /><stop offset=".55" stopColor="#6e6e6e" /><stop offset="1" stopColor="#4c4c4c" /></linearGradient>
      <linearGradient id="pipeH" x1="0" y1="0" x2="1" y2="0"><stop offset="0" stopColor="#5a5a5a" /><stop offset=".5" stopColor="#9a9a9a" /><stop offset="1" stopColor="#5e5e5e" /></linearGradient>
      <linearGradient id="finG" x1="0" y1="0" x2="1" y2="0"><stop offset="0" stopColor="#585858" /><stop offset=".5" stopColor="#787878" /><stop offset="1" stopColor="#565656" /></linearGradient>
      <linearGradient id="shell" x1="0" y1="0" x2="0" y2="1"><stop offset="0" stopColor="#555" /><stop offset="1" stopColor="#7c7c7c" /></linearGradient>
      <linearGradient id="block" x1="0" y1="0" x2="1" y2="1"><stop offset="0" stopColor="#6a6a6a" /><stop offset="1" stopColor="#757575" /></linearGradient>
      <linearGradient id="side" x1="0" y1="0" x2="1" y2="0"><stop offset="0" stopColor="#808080" /><stop offset="1" stopColor="#6c6c6c" /></linearGradient>
      <pattern id="hatchBlue" width="2" height="2" patternUnits="userSpaceOnUse"><rect width="2" height="2" fill="#7f9cc8" /><rect width="1" height="1" fill="#141e36" /><rect x="1" y="1" width="1" height="1" fill="#141e36" /></pattern>
      <pattern id="hatchGrey" width="2" height="2" patternUnits="userSpaceOnUse"><rect width="2" height="2" fill="#6e6e6e" /><rect width="1" height="1" fill="#1c1c1c" /><rect x="1" y="1" width="1" height="1" fill="#1c1c1c" /></pattern>
      <pattern id="dith" width="6" height="6" patternUnits="userSpaceOnUse"><rect width="6" height="6" fill="#8a8a8a" /><rect width="3" height="3" fill="#5e5e5e" /><rect x="3" y="3" width="3" height="3" fill="#a0a0a0" /></pattern>
    </defs>

    {/* silencer */}
    <path d="M939 225C945 219 1000 219 1007 225L1013 434C1008 445 950 446 946 434Z" fill="url(#hatchBlue)" />
    <path d="M956 233L990 233L998 443L963 443Z" fill="url(#hatchGrey)" />
    <path d="M955 203V231C962 237 984 237 990 231V203Z" fill="url(#pipeH)" stroke="#111" />
    <ellipse cx="972" cy="203" rx="18" ry="6" fill="#777" stroke="#111" strokeWidth="1.4" />
    <path d="M939 225L946 434C950 446 1008 445 1013 434L1007 225" fill="none" stroke="#0a1020" strokeWidth="1.4" strokeDasharray="14 1" />
    <path d="M956 233L963 443M990 233L998 443" stroke="#111" strokeWidth="1" fill="none" />

    <g transform="translate(660 440) scale(.3333)" strokeLinejoin="round">
      {/* flywheel */}
      <path d="M1060 420C1140 480 1180 600 1172 720C1165 840 1130 930 1090 975L1000 900L1000 500Z" fill="#6e6e6e" stroke="#111" strokeWidth="3" />
      <path d="M1065 440C1125 510 1155 620 1145 730C1140 830 1115 910 1090 960" fill="none" stroke="#222" strokeWidth="3" />
      {/* rear wall and deck */}
      <path d="M1000 225L1060 245L1068 525L965 450L900 400L900 240Z" fill="#858585" stroke="#111" strokeWidth="3" />
      <path d="M405 525L975 445L1068 525L1000 545L405 625Z" fill="#7e7e7e" stroke="#222" strokeWidth="2" />
      {/* flanges and barrels */}
      <path d="M438 550C500 548 540 545 560 540L562 575C520 592 470 596 438 596Z" fill="#6c6c6c" stroke="#111" strokeWidth="3" />
      <path d="M565 510C600 530 740 520 770 490L770 530C730 560 600 565 565 545Z" fill="#6c6c6c" stroke="#111" strokeWidth="3" />
      <path d="M770 480C810 500 940 490 972 465L972 500C930 530 810 535 770 515Z" fill="#6c6c6c" stroke="#111" strokeWidth="3" />
      <path d="M440 505H518V545C490 560 460 558 440 552Z" fill="url(#pipeH)" stroke="#111" strokeWidth="3" />
      <path d="M585 480L725 465V505C700 525 610 528 585 510Z" fill="url(#pipeH)" stroke="#111" strokeWidth="3" />
      <path d="M790 450L930 435V475C905 495 815 498 790 480Z" fill="url(#pipeH)" stroke="#111" strokeWidth="3" />
      <Fins cx={488} rx={60} top={312} n={13} step={15} ry={17} />
      <Fins cx={650} rx={100} top={285} n={12} step={15} ry={24} />
      <Fins cx={852} rx={101} top={255} n={12} step={15} ry={24} />
      {/* intake pipes */}
      <path d="M345 145L880 62L890 100L470 190L375 222L345 190Z" fill="url(#pipeV)" stroke="#111" strokeWidth="3" strokeDasharray="12 2" />
      <ellipse cx="368" cy="180" rx="26" ry="40" transform="rotate(-10 368 180)" fill="#7a7a7a" stroke="#111" strokeWidth="3" />
      <path d="M908 0H1017V62L1028 85L992 155L905 100L905 60Z" fill="url(#pipeH)" stroke="#111" strokeWidth="4" />
      <path d="M905 62C930 75 1000 72 1017 60" fill="none" stroke="#111" strokeWidth="3" />
      <path d="M505 160L890 97L1030 78C1060 95 1070 150 1058 215L945 217L535 288Z" fill="url(#pipeV)" stroke="#111" strokeWidth="3" />
      <path d="M890 97L990 155L1030 78" fill="#8a8a8a" stroke="#111" strokeWidth="3" />
      <path d="M945 215L1000 175L1037 205Z" fill="#aaa" stroke="#111" strokeWidth="3" />
      <ellipse cx="505" cy="225" rx="29" ry="66" transform="rotate(-8 505 225)" fill="#7f7f7f" stroke="#111" strokeWidth="3" />
      {/* fins top left and bracket */}
      {[0, 1, 2, 3, 4, 5, 6].map(i => <path key={i} d={`M${266 + i * 3} ${222 + i * 10}L${338 - i} ${204 + i * 8}L${352 + i} ${240 + i * 8}L${282 + i * 4} ${252 + i * 10}Z`} fill="#7a7a7a" stroke="#111" strokeWidth="3" />)}
      <path d="M345 220L410 215L470 305L430 310Z" fill="#8a8a8a" stroke="#111" strokeWidth="3" />
      <path d="M405 220L430 215L465 305L440 310Z" fill="#666" stroke="#111" strokeWidth="3" />
      <path d="M355 250L405 245L425 290L360 295Z" fill="#808080" stroke="#111" strokeWidth="3" />
      <path d="M355 295C370 285 410 285 422 295L412 438L375 442Z" fill="url(#pipeH)" stroke="#111" strokeWidth="3" strokeDasharray="20 3" />
      {/* middle block */}
      <path d="M410 625L1000 540L1005 560L1090 700L1100 730L500 815L420 820Z" fill="url(#block)" stroke="#111" strokeWidth="3" />
      <path d="M1000 555C1020 545 1060 540 1078 548L1060 650C1045 660 1025 658 1015 650Z" fill="url(#pipeH)" stroke="#111" strokeWidth="3" />
      {/* lower recess */}
      <path d="M500 815L1110 730L1115 905L450 1005L440 830Z" fill="#666" stroke="#111" strokeWidth="3" />
      <path d="M565 850L990 780V860L570 925Z" fill="url(#pipeV)" stroke="#111" strokeWidth="2" />
      <path d="M535 850L565 845L570 930L540 940Z" fill="#808080" stroke="#111" strokeWidth="3" />
      <path d="M980 745L1105 725L1115 745V880L995 910Z" fill="#7a7a7a" stroke="#111" strokeWidth="3" />
      <path d="M980 745L1105 725L1112 755L990 772Z" fill="#8a8a8a" stroke="#111" strokeWidth="2" />
      <path d="M495 815L950 755L952 772L505 838Z" fill="#707070" stroke="#111" strokeWidth="4" />
      <path d="M530 948L955 888L958 906L535 968Z" fill="#707070" stroke="#111" strokeWidth="4" />
      <path d="M745 895L775 875L795 885L770 935L740 925Z" fill="#888" stroke="#111" strokeWidth="3" />
      <ellipse cx="778" cy="888" rx="18" ry="14" fill="#9a9a9a" stroke="#111" strokeWidth="3" />
      {/* lower shell */}
      <path d="M445 1005L1112 900L1090 990L415 1103Z" fill="url(#shell)" stroke="#111" strokeWidth="3" />
      <path d="M450 995L1110 895" fill="none" stroke="#222" strokeWidth="5" strokeDasharray="6 3" />
      {/* control box */}
      <path d="M500 650L610 630L715 690L510 730Z" fill="#7c7c7c" stroke="#111" strokeWidth="3" />
      <path d="M510 682L715 690L720 770L515 795Z" fill="#696969" stroke="#111" strokeWidth="3" />
      {[[500, 612], [532, 606], [572, 600]].map(([x, y], i) => <path key={i} d={`M${x} ${y + 8}C${x + 6} ${y} ${x + 20} ${y} ${x + 24} ${y + 8}V${y + 45}H${x}Z`} fill="url(#pipeH)" stroke="#111" strokeWidth="3" />)}
      {[[538, 722], [578, 716]].map(([x, y], i) => <path key={i} d={`M${x} ${y + 6}C${x + 6} ${y} ${x + 24} ${y} ${x + 30} ${y + 6}V${y + 66}H${x}Z`} fill="url(#pipeH)" stroke="#111" strokeWidth="3" />)}
      <circle cx="578" cy="772" r="12" fill="#777" stroke="#111" strokeWidth="3" />
      <path d="M668 710L690 710L695 782L680 782Z" fill="#8a8a8a" stroke="#111" strokeWidth="3" />
      {/* gear rim */}
      <path d="M410 625L480 615L515 700V790L450 830L430 780L450 700Z" fill="#666" stroke="#111" strokeWidth="3" />
      <path d="M425 640L490 625M445 672L505 660M462 705L512 695M462 745L515 735M455 785L512 775" fill="none" stroke="#111" strokeWidth="4" />
      {/* column */}
      <path d="M255 268L345 298L365 440L410 470L410 620L355 665L355 780L448 830L440 1102L415 1103L290 1040L265 920L345 880L350 810L262 560Z" fill="url(#side)" stroke="#111" strokeWidth="3" />
      <path d="M450 835L505 825L515 990L460 1000Z" fill="#666" stroke="#111" strokeWidth="3" />
      <path d="M455 870L505 858M462 905L508 895M462 945L510 935" fill="none" stroke="#111" strokeWidth="4" />
      <path d="M395 505V520M395 600V615" stroke="#111" strokeWidth="3" fill="none" />
      {/* knob */}
      <ellipse cx="398" cy="725" rx="47" ry="73" transform="rotate(-8 398 725)" fill="#6e6e6e" stroke="#111" strokeWidth="3" />
      <path d="M372 690L382 672L420 672L435 700L410 770L385 772L362 740Z" fill="url(#pipeH)" stroke="#111" strokeWidth="3" />
      <path d="M382 672L392 695L435 700M392 695L362 740" fill="none" stroke="#222" strokeWidth="2" />
      {/* air filter */}
      <path d="M98 255L232 233L255 270L262 492L128 536Z" fill="url(#pipeV)" stroke="#111" strokeWidth="3" strokeDasharray="16 2" />
      <ellipse cx="100" cy="395" rx="58" ry="141" transform="rotate(-3 100 395)" fill="url(#dith)" stroke="#111" strokeWidth="4" strokeDasharray="5 2" />
      <circle cx="103" cy="390" r="16" fill="none" stroke="#444" strokeWidth="3" />
      {/* belts */}
      <path d="M130 535L200 500L240 492L245 520L150 548Z" fill="#777" stroke="#111" strokeWidth="3" />
      <path d="M165 540L165 745" stroke="#111" strokeWidth="44" fill="none" />
      <path d="M165 540L165 745" stroke="#7c7c7c" strokeWidth="38" fill="none" />
      <path d="M165 555L165 725" stroke="#555" strokeWidth="14" fill="none" />
      <path d="M216 498L335 822L300 895L170 780" stroke="#111" strokeWidth="38" fill="none" strokeLinejoin="round" />
      <path d="M216 498L335 822L300 895L170 780" stroke="#7c7c7c" strokeWidth="32" fill="none" strokeLinejoin="round" />
      <circle cx="225" cy="745" r="20" fill="#808080" stroke="#111" strokeWidth="3" />
      <circle cx="240" cy="798" r="18" fill="#6e6e6e" stroke="#111" strokeWidth="3" />
      <path d="M195 760H225" stroke="#111" strokeWidth="14" />
      <circle cx="178" cy="762" r="25" fill="#7e7e7e" stroke="#111" strokeWidth="3" />
      <circle cx="178" cy="762" r="14" fill="#999" stroke="#111" strokeWidth="3" />
      <circle cx="178" cy="762" r="5" fill="#444" />
      <circle cx="295" cy="840" r="44" fill="#7e7e7e" stroke="#111" strokeWidth="3" />
      <ellipse cx="295" cy="840" rx="24" ry="36" fill="#8a8a8a" stroke="#111" strokeWidth="3" />
      <circle cx="297" cy="840" r="7" fill="#444" />
    </g>

    {/* coordinate axes */}
    <text x="245" y="828" fontSize="11" fill="#38a838" fontFamily={FONT}>Y</text>
    <text x="232" y="856" fontSize="11" fill="#c03030" fontFamily={FONT}>X</text>
    <text x="281" y="859" fontSize="11" fill="#3a7aa8" fontFamily={FONT}>Z</text>
    <path d="M250 860V833" stroke="#1fa81f" strokeWidth="2.5" /><path d="M250 829L247 838H253Z" fill="#2ac02a" />
    <path d="M250 860L240 852" stroke="#c81818" strokeWidth="3.5" />
    <path d="M250 860L272 856" stroke="#1a78c0" strokeWidth="2.5" /><path d="M279 856L269 852V860Z" fill="#1a78c0" />
  </ViewSvg>
);

const MENU: [string, string][] = [['Ф', 'айл'], ['Р', 'едактор'], ['В', 'ид'], ['', 'Операции'], ['С', 'пецификация'], ['С', 'ервис'], ['О', 'кно'], ['С', 'правка'], ['Б', 'иблиотеки']];

export default function App() {
  return (
    <Page>
      <Global />
      <TitleBar>
        <LogoC>K</LogoC>
        <span>КОМПАС-3D V13 Home (Не для коммерческого использования) - [движок 3 цилиндра]</span>
        <WinBtns>
          <WinBtn $w={25}><MinBar /></WinBtn>
          <WinBtn $w={24}>❐</WinBtn>
          <WinBtn $w={44}>X</WinBtn>
        </WinBtns>
      </TitleBar>
      <MenuBar>
        <Grip />
        <Btn><Icon k="docK" size={18} /></Btn>
        {MENU.map(([u, r], i) => <MenuItem key={i}>{u && <u>{u}</u>}{r}</MenuItem>)}
        <DocBtns><MinBar /><span>❐</span><span>X</span></DocBtns>
      </MenuBar>
      <Rows>
        {ROWS.map((row, i) => (
          <Row key={i} $h={row.h}>
            {row.groups.map((g, j) => <Tool key={j} g={g} left={j === 0 ? 0 : g.s - row.groups[j - 1].e} />)}
          </Row>
        ))}
      </Rows>
      <Work>
        <Side>
          <SideHead>
            <span>Дерево модели</span>
            <SideActions>
              <Svg width="10" height="12" viewBox="0 0 10 12"><path d="M2 1H8M3 1V7M7 1V7M1 7H9M5 7V11" fill="none" stroke="#222" strokeWidth="1.3" /></Svg>
              <span>✕</span>
            </SideActions>
          </SideHead>
          <SideTools>
            <Icon k="treeI" size={18} />
            <Btn><Icon k="coilG" size={18} /></Btn>
            <Caret $grey />
            <SideSep />
            <Btn $on><Icon k="treeDoc" size={16} /></Btn>
            <Btn><Icon k="stack" size={18} /></Btn>
          </SideTools>
          <TreeFrame>
            <TreeList>
              <TreeLine />
              <TreeRow $root>
                <Root><Icon k="rootT" /><RootBadge>!</RootBadge></Root>
                <span>Деталь (Тел-3)</span>
              </TreeRow>
              {TREE.map(([k, t], i) => (
                <TreeRow key={i}>
                  {i === 0 && <Expander />}
                  <Icon k={k} />
                  <span>{t}</span>
                </TreeRow>
              ))}
            </TreeList>
            <Scroll>
              <ScrollArrow $dir="up" />
              <Thumb />
              <ScrollArrow $dir="down" />
            </Scroll>
            <Scroll $h>
              <ScrollArrow $dir="left" />
              <Thumb $h />
              <ScrollArrow $dir="right" />
            </Scroll>
            <ScrollCorner />
          </TreeFrame>
          <LowerPane />
          <Tabs><Tab>Построение</Tab></Tabs>
        </Side>
        <View><Engine /></View>
      </Work>
      <Cmd>
        <CmdIcons>
          <Svg width="18" height="18" viewBox="0 0 18 18">
            <path d="M5.5 1H12.5L17 5.5V12.5L12.5 17H5.5L1 12.5V5.5Z" fill="#d81818" stroke="#a01010" />
            <text x="9" y="11.5" fontSize="6.5" fontWeight="700" fill="#fff" textAnchor="middle" fontFamily={FONT}>STOP</text>
          </Svg>
          <Svg width="14" height="18" viewBox="0 0 14 18">
            <path d="M1 1H13V14H8L7 17L5 14H1Z" fill="#fff" stroke="#123a8e" strokeWidth="1.2" />
            <text x="7" y="11.5" fontSize="10" fontWeight="700" fill="#123a8e" textAnchor="middle" fontFamily={FONT}>?</text>
          </Svg>
        </CmdIcons>
        <CmdMain>
          <CmdField />
          <CmdTabs><CmdTab><Icon k="rotate" size={18} />Повернуть</CmdTab></CmdTabs>
        </CmdMain>
      </Cmd>
      <Status>Нажмите левую кнопку мыши и, не отпуская, поверните изображение</Status>
      <Taskbar>
        <Orb>
          <Svg width="16" height="16" viewBox="0 0 16 16">
            <path d="M1 3C3 2 5 2 7 3V7.5C5 7 3 7 1 7.5Z" fill="#e8502a" />
            <path d="M8 3C10 4 12 4 15 2.5V7C12 8 10 8 8 7.5Z" fill="#7ec242" />
            <path d="M1 8.5C3 8 5 8 7 8.5V13C5 12 3 12 1 13Z" fill="#2f9ae0" />
            <path d="M8 8.5C10 9 12 9 15 8V12.5C12 14 10 14 8 13Z" fill="#f4c020" />
          </Svg>
        </Orb>
        <Quick>
          <Svg width="20" height="20" viewBox="0 0 20 20"><circle cx="10" cy="10" r="6.5" fill="#e0a020" stroke="#6a4a08" /><path d="M10 5L14 13H6Z" fill="#4a3004" /></Svg>
          <Svg width="22" height="20" viewBox="0 0 20 20"><circle cx="10" cy="10" r="7.5" fill="#f4d8c0" stroke="#b82818" strokeWidth="1.6" /><path d="M5 13C6 8 9 5 11 5C11 8 15 9 15 13C13 15 7 15 5 13Z" fill="#c83018" /></Svg>
          <Svg width="20" height="20" viewBox="0 0 20 20"><path d="M3 15L13 3L17 6L8 17Z" fill="#d8b060" stroke="#6a5020" /><path d="M7 6L16 14M5 9L13 16" stroke="#f8e8b0" strokeWidth="1.5" /></Svg>
          <Svg width="20" height="20" viewBox="0 0 20 20"><path d="M4 9C4 4 14 3 16 8C17 13 13 18 9 17C6 16 4 13 4 9Z" fill="#d8d8d8" stroke="#666" /><circle cx="11" cy="8" r="2.5" fill="#555" /></Svg>
          <Svg width="22" height="20" viewBox="0 0 20 20"><circle cx="10" cy="10" r="7" fill="none" stroke="#e0822a" strokeWidth="2" /><circle cx="10" cy="10" r="3" fill="none" stroke="#e0822a" strokeWidth="2" /><path d="M13 7V12C13 14 17 14 17 10" fill="none" stroke="#e0822a" strokeWidth="1.6" /></Svg>
        </Quick>
        <Chev>›</Chev>
        <TaskBtn $w={155}><OperaO /><span>Аудиозаписи Паши М...</span></TaskBtn>
        <TaskBtn $on $w={157}><LogoC>K</LogoC><span>КОМПАС-3D V13 Hom...</span></TaskBtn>
        <Tray>
          <Svg width="16" height="16" viewBox="0 0 16 16"><path d="M5 1H15V10H5Z" fill="#6a90c8" stroke="#ccd" /><path d="M1 6H8V14H1Z" fill="#3a6ec0" stroke="#dde" /></Svg>
          <Svg width="16" height="16" viewBox="0 0 16 16"><circle cx="6" cy="7" r="4" fill="#b8b8b8" stroke="#777" /><path d="M8 14C11 13 13 11 14 8M10 15C13 14 15 12 16 9" fill="none" stroke="#7f8cc0" /></Svg>
          <Svg width="17" height="18" viewBox="0 0 17 18"><rect width="17" height="18" fill="#3aa0b8" /><path d="M4 3L8 8L5 13M10 2L13 7L11 14" stroke="#a8e6f0" strokeWidth="2" fill="none" /></Svg>
          <Svg width="16" height="16" viewBox="0 0 16 16"><rect width="16" height="4" fill="#f4f4f4" /><rect y="4" width="16" height="4" fill="#3a58a8" /><rect y="8" width="16" height="4" fill="#c02030" /><path d="M1 15H5M6 15H10M11 15H15" stroke="#eee" /></Svg>
          <Clock>21:11</Clock>
        </Tray>
      </Taskbar>
    </Page>
  );
}
